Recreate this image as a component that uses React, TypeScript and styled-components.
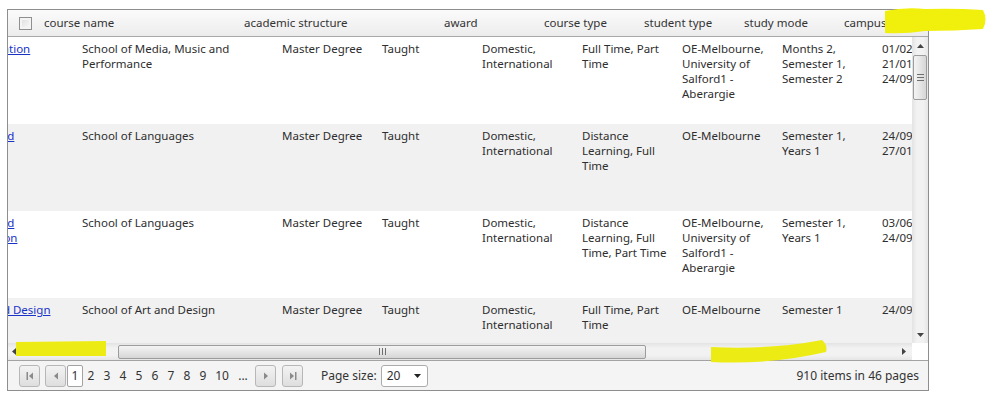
import React from "react"
import styled, { createGlobalStyle } from "styled-components"

type Course = {
  name: string
  school: string
  award: string
  type: string
  student: string
  mode: string
  campus: string
  intake: string
  dates: string
}

const courses: Course[] = [
  {
    name: "MA Science Communication",
    school: "School of Media, Music and Performance",
    award: "Master Degree",
    type: "Taught",
    student: "Domestic, International",
    mode: "Full Time, Part Time",
    campus: "OE-Melbourne, University of Salford1 - Aberargie",
    intake: "Months 2, Semester 1, Semester 2",
    dates: "01/02/2014, 21/01/2015, 24/09/2014",
  },
  {
    name: "MA Bible Translation and Interpreting",
    school: "School of Languages",
    award: "Master Degree",
    type: "Taught",
    student: "Domestic, International",
    mode: "Distance Learning, Full Time",
    campus: "OE-Melbourne",
    intake: "Semester 1, Years 1",
    dates: "24/09/2014, 27/01/2015",
  },
  {
    name: "MA Bible Translation and Diplomatic Interpretation",
    school: "School of Languages",
    award: "Master Degree",
    type: "Taught",
    student: "Domestic, International",
    mode: "Distance Learning, Full Time, Part Time",
    campus: "OE-Melbourne, University of Salford1 - Aberargie",
    intake: "Semester 1, Years 1",
    dates: "03/06/2014, 24/09/2014",
  },
  {
    name: "MA Professional Art and Design",
    school: "School of Art and Design",
    award: "Master Degree",
    type: "Taught",
    student: "Domestic, International",
    mode: "Full Time, Part Time",
    campus: "OE-Melbourne",
    intake: "Semester 1",
    dates: "24/09/2014",
  },
]

const headers = [
  { label: "course name", w: 200 },
  { label: "academic structure", w: 200 },
  { label: "award", w: 100 },
  { label: "course type", w: 100 },
  { label: "student type", w: 100 },
  { label: "study mode", w: 100 },
  { label: "campus", w: 100 },
]

const GlobalStyle = createGlobalStyle`
  body {
    margin: 0;
    background: #fff;
    font-family: "Noto Sans", "Open Sans", sans-serif;
    font-size: 11.5px;
    color: #2e2e2e;
  }
`

const Page = styled.div`
  position: relative;
  width: 987px;
  height: 396px;
  padding: 9px 0 0 7px;
  box-sizing: border-box;
`

const Frame = styled.div`
  width: 922px;
  border: 1px solid #8e8e8e;
  box-sizing: border-box;
  overflow: hidden;
  background: #fff;
`

const HeaderRow = styled.div`
  display: flex;
  height: 26px;
  border-bottom: 1px solid #a9a9a9;
  background: linear-gradient(#fbfbfb, #ececec);
  white-space: nowrap;
`

const HeaderCell = styled.div<{ $w: number }>`
  flex: none;
  width: ${p => p.$w}px;
  padding-left: 7px;
  box-sizing: border-box;
  line-height: 26px;
  color: #333;
`

const CheckCell = styled.div`
  flex: none;
  width: 29px;
  padding-left: 11px;
  box-sizing: border-box;
  display: flex;
  align-items: center;
`

const CheckBox = styled.span`
  width: 13px;
  height: 13px;
  box-sizing: border-box;
  border: 1px solid #8f8f8f;
  background: linear-gradient(135deg, #dcdcdc, #fbfbfb);
  box-shadow: inset 0 0 0 2px #f4f4f4;
`

const Body = styled.div`
  display: grid;
  grid-template-columns: 1fr 16px;
  grid-template-rows: 306px 17px;
`

const Viewport = styled.div`
  overflow: hidden;
`

const Table = styled.div<{ $scroll: number }>`
  display: flex;
  flex-direction: column;
  width: max-content;
  transform: translateX(-${p => p.$scroll}px);
`

const Row = styled.div<{ $alt: boolean }>`
  display: flex;
  height: 87px;
  background: ${p => (p.$alt ? "#f1f1f1" : "#fff")};
`

const Cell = styled.div<{ $w: number }>`
  flex: none;
  width: ${p => p.$w}px;
  padding: 4px 4px 0 7px;
  box-sizing: border-box;
  line-height: 15px;
  overflow: hidden;
`

const LinkCell = styled(Cell)`
  padding-left: 5px;
  padding-right: 6px;
`

const CourseLink = styled.a`
  color: #1932c8;
  text-decoration: underline;
  cursor: pointer;
`

const VScroll = styled.div`
  display: flex;
  flex-direction: column;
  align-items: center;
  background: linear-gradient(90deg, #e3e3e3, #f2f2f2 30%, #f2f2f2 70%, #e6e6e6);
`

const HScroll = styled.div`
  display: flex;
  align-items: center;
  background: linear-gradient(#e3e3e3, #f2f2f2 30%, #f2f2f2 70%, #e6e6e6);
`

const ArrowBox = styled.div<{ $justify?: string }>`
  flex: none;
  width: 17px;
  height: 17px;
  display: flex;
  align-items: center;
  justify-content: ${p => p.$justify ?? "center"};
  padding-left: ${p => (p.$justify ? 4 : 0)}px;
  box-sizing: border-box;
`

const VThumb = styled.div`
  width: 14px;
  height: 45px;
  margin-top: 1px;
  box-sizing: border-box;
  border: 1px solid #9c9c9c;
  border-radius: 2px;
  background: linear-gradient(90deg, #f4f4f4, #e6e6e6 50%, #d6d6d6);
  display: grid;
  place-items: center;
`

const HThumb = styled.div<{ $start: number; $size: number }>`
  flex: none;
  width: ${p => p.$size}px;
  height: 14px;
  margin-left: ${p => p.$start}px;
  box-sizing: border-box;
  border: 1px solid #9c9c9c;
  border-radius: 2px;
  background: linear-gradient(#f4f4f4, #e6e6e6 50%, #d6d6d6);
  display: grid;
  place-items: center;
`

const Spacer = styled.div`
  flex: 1;
`

const Corner = styled.div`
  background: #fff;
`

const Pager = styled.div`
  display: flex;
  align-items: center;
  height: 29px;
  border-top: 1px solid #a3a3a3;
  background: #f4f4f4;
  padding: 0 9px 0 11px;
  font-size: 12px;
`

const NavButton = styled.span<{ $ml?: number }>`
  flex: none;
  width: 21px;
  height: 22px;
  margin-left: ${p => p.$ml ?? 0}px;
  box-sizing: border-box;
  border: 1px solid #b7b7b7;
  border-radius: 3px;
  background: linear-gradient(#f3f3f3, #dedede);
  display: grid;
  place-items: center;
`

const Pages = styled.div`
  display: flex;
  align-items: center;
  margin-left: 1px;
`

const PageNum = styled.span<{ $active?: boolean; $w?: number }>`
  min-width: ${p => p.$w ?? 16}px;
  height: 22px;
  box-sizing: border-box;
  text-align: center;
  line-height: 20px;
  color: #333;
  background: ${p => (p.$active ? "#fff" : "transparent")};
  border: 1px solid ${p => (p.$active ? "#a3a3a3" : "transparent")};
  border-radius: 2px;
`

const SizeLabel = styled.span`
  margin-left: 18px;
  color: #333;
`

const SizeSelect = styled.div`
  width: 47px;
  height: 22px;
  margin-left: 4px;
  box-sizing: border-box;
  border: 1px solid #ababab;
  border-radius: 3px;
  background: #fff;
  display: flex;
  align-items: center;
  justify-content: space-between;
  padding: 0 6px 0 5px;
`

const Info = styled.span`
  margin-left: auto;
  color: #333;
`

const Marks = styled.svg`
  position: absolute;
  left: 0;
  top: 0;
  pointer-events: none;
`

const Tri = ({ dir, color = "#444" }: { dir: "up" | "down" | "left" | "right"; color?: string }) => {
  const pts = {
    up: "0,4 3.5,0 7,4",
    down: "0,0 7,0 3.5,4",
    left: "4,0 4,7 0,3.5",
    right: "0,0 4,3.5 0,7",
  }[dir]
  const vertical = dir === "up" || dir === "down"
  return (
    <svg width={vertical ? 7 : 4} height={vertical ? 4 : 7}>
      <polygon points={pts} fill={color} />
    </svg>
  )
}

const PagerIcon = ({ kind }: { kind: "first" | "prev" | "next" | "last" }) => (
  <svg width="10" height="10" viewBox="0 0 10 10">
    {kind === "first" && <rect x="1.5" y="1" width="1.5" height="8" fill="#8a8a8a" />}
    {kind === "last" && <rect x="7" y="1" width="1.5" height="8" fill="#8a8a8a" />}
    {(kind === "first" || kind === "prev") && (
      <polygon points={kind === "first" ? "8,1.5 8,8.5 4,5" : "7,1.5 7,8.5 3,5"} fill="#8a8a8a" />
    )}
    {(kind === "next" || kind === "last") && (
      <polygon points={kind === "last" ? "2,1.5 2,8.5 6,5" : "3,1.5 3,8.5 7,5"} fill="#8a8a8a" />
    )}
  </svg>
)

const Grip = ({ vertical }: { vertical?: boolean }) => (
  <svg width="7" height="7">
    {[0, 3, 6].map(o =>
      vertical ? (
        <rect key={o} x="0" y={o} width="7" height="1" fill="#6f6f6f" />
      ) : (
        <rect key={o} x={o} y="0" width="1" height="7" fill="#6f6f6f" />
      )
    )}
  </svg>
)

const bodyCols = [29, 200, 200, 100, 100, 100, 100, 100, 100, 100]

const App = () => {
  return (
    <Page>
      <GlobalStyle />
      <Frame>
        <HeaderRow>
          <CheckCell>
            <CheckBox />
          </CheckCell>
          {headers.map(h => (
            <HeaderCell key={h.label} $w={h.w}>
              {h.label}
            </HeaderCell>
          ))}
        </HeaderRow>
        <Body>
          <Viewport>
            <Table $scroll={162}>
              {courses.map((c, i) => (
                <Row key={i} $alt={i % 2 === 1}>
                  <Cell $w={bodyCols[0]} />
                  <LinkCell $w={bodyCols[1]}>
                    <CourseLink>{c.name}</CourseLink>
                  </LinkCell>
                  <Cell $w={bodyCols[2]}>{c.school}</Cell>
                  <Cell $w={bodyCols[3]}>{c.award}</Cell>
                  <Cell $w={bodyCols[4]}>{c.type}</Cell>
                  <Cell $w={bodyCols[5]}>{c.student}</Cell>
                  <Cell $w={bodyCols[6]}>{c.mode}</Cell>
                  <Cell $w={bodyCols[7]}>{c.campus}</Cell>
                  <Cell $w={bodyCols[8]}>{c.intake}</Cell>
                  <Cell $w={bodyCols[9]}>{c.dates}</Cell>
                </Row>
              ))}
            </Table>
          </Viewport>
          <VScroll>
            <ArrowBox>
              <Tri dir="up" />
            </ArrowBox>
            <VThumb>
              <Grip vertical />
            </VThumb>
            <Spacer />
            <ArrowBox>
              <Tri dir="down" />
            </ArrowBox>
          </VScroll>
          <HScroll>
            <ArrowBox $justify="flex-start">
              <Tri dir="left" />
            </ArrowBox>
            <HThumb $start={93} $size={528}>
              <Grip />
            </HThumb>
            <Spacer />
            <ArrowBox>
              <Tri dir="right" />
            </ArrowBox>
          </HScroll>
          <Corner />
        </Body>
        <Pager>
          <NavButton>
            <PagerIcon kind="first" />
          </NavButton>
          <NavButton $ml={5}>
            <PagerIcon kind="prev" />
          </NavButton>
          <Pages>
            {["1", "2", "3", "4", "5", "6", "7", "8", "9"].map(n => (
              <PageNum key={n} $active={n === "1"}>
                {n}
              </PageNum>
            ))}
            <PageNum $w={22}>10</PageNum>
            <PageNum $w={20}>...</PageNum>
          </Pages>
          <NavButton $ml={2}>
            <PagerIcon kind="next" />
          </NavButton>
          <NavButton $ml={6}>
            <PagerIcon kind="last" />
          </NavButton>
          <SizeLabel>Page size:</SizeLabel>
          <SizeSelect>
            <span>20</span>
            <Tri dir="down" color="#222" />
          </SizeSelect>
          <Info>910 items in 46 pages</Info>
        </Pager>
      </Frame>
      <Marks width="987" height="396">
        <path d="M885 11 Q905 7 925 9 Q955 8 983 10 Q988 19 983 29 Q955 31 925 31 Q905 34 885 33 Z" fill="#f0f00c" />
        <path d="M16 342 L106 341 L106 356 L16 356 Z" fill="#ecec14" />
        <path d="M711 347 Q770 350 822 340 Q828 345 826 352 Q770 365 711 362 Z" fill="#ecec14" />
      </Marks>
    </Page>
  )
}

export default App
